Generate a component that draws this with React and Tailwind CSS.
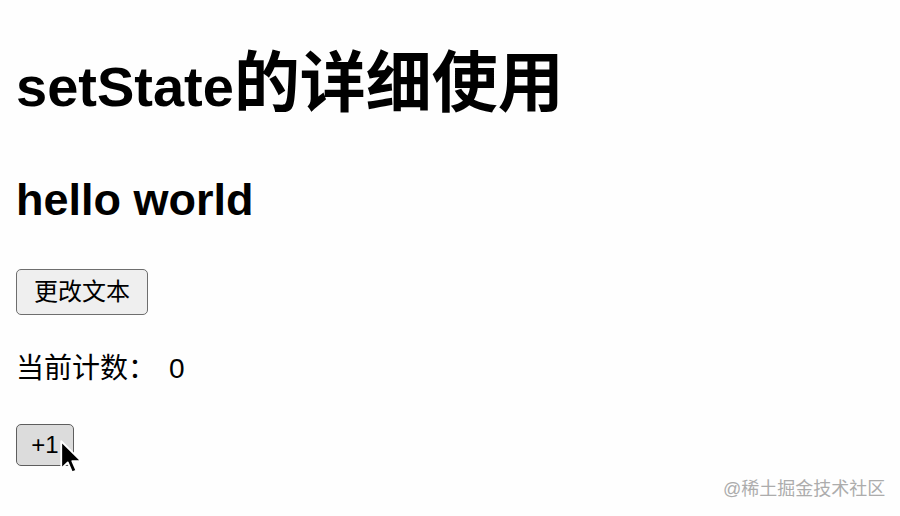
import React from "react";

const latin = { fontFamily: '"Liberation Sans", "Noto Sans CJK SC", sans-serif' };

function Cursor() {
  return (
    <svg
      className="absolute left-[43px] top-[15px]"
      width="27"
      height="36"
      viewBox="0 0 12 16"
    >
      <path
        d="M1 1 L1 13.2 L3.9 10.4 L5.8 14.8 L7.7 14 L5.9 9.8 L9.9 9.8 Z"
        fill="#000"
        stroke="#fff"
        strokeWidth="0.8"
        strokeLinejoin="round"
      />
    </svg>
  );
}

export default function App() {
  return (
    <div
      className="relative w-[900px] h-[516px] bg-[#fefefe] text-black overflow-hidden px-[16px] pt-[51px]"
      style={latin}
    >
      <h1 className="h-[64px] text-[56px] leading-[64px] font-bold m-0 whitespace-nowrap">
        setState<span className="text-[66px] leading-[64px]">的详细使用</span>
      </h1>
      <h2 className="mt-[59px] text-[45px] leading-[52px] font-bold whitespace-nowrap">
        hello world
      </h2>
      <button className="mt-[43px] flex items-center justify-center w-[132px] h-[46px] rounded-[5px] border-[1.5px] border-[#6e6e6e] bg-[#efefef] text-[24px] leading-none">
        更改文本
      </button>
      <p className="mt-[38px] text-[28px] leading-[32px] whitespace-nowrap">
        当前计数：<span className="ml-[13px]">0</span>
      </p>
      <div className="relative mt-[39px] w-[58px] h-[42px]">
        <button className="flex items-center justify-center w-[58px] h-[42px] rounded-[5px] border-[1.5px] border-[#5e5e5e] bg-[#dcdcdc] text-[24px] leading-none">
          +1
        </button>
        <Cursor />
      </div>
      <div
        className="absolute left-[723px] top-[478px] text-[18px] leading-[22px] text-[#acacac] whitespace-nowrap"
        style={{ textShadow: "0 0 1px #fff" }}
      >
        @稀土掘金技术社区
      </div>
    </div>
  );
}
